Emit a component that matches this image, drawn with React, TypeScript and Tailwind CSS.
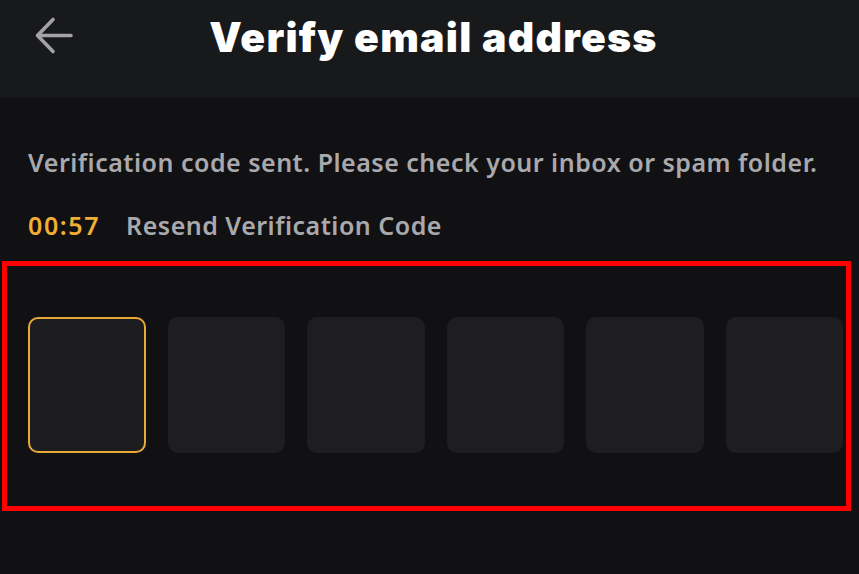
import { useState } from "react";

const CODE_LENGTH = 6;

function BackArrow() {
    return (
        <svg width="40" height="40" viewBox="0 0 40 40" fill="none" className="text-[#a3a3a7]">
            <path
                d="M37 19.5H4M19 3.5L3.5 19.5L19 35.5"
                stroke="currentColor"
                strokeWidth="3.6"
                strokeLinecap="round"
                strokeLinejoin="round"
            />
        </svg>
    );
}

export default function App() {
    const [active] = useState(0);

    return (
        <div className="w-[859px] h-[574px] bg-[#111113] overflow-hidden font-['Open_Sans',sans-serif]">
            {/* HEADER */}
            <div className="h-[98px] bg-[#18191b] flex items-start pt-[16px] px-[34px]">
                <div className="w-[40px] flex justify-center">
                    <BackArrow />
                </div>
                <h1 className="flex-1 text-center text-white text-[41px] leading-[42px] font-black font-['Inter',sans-serif] tracking-[1.25px] pr-[32px]">
                    Verify email address
                </h1>
            </div>

            {/* BODY */}
            <div className="px-[28px] pt-[48px] font-['Noto_Sans',sans-serif] font-semibold text-[25px] leading-[32px] tracking-[0.5px]">
                <p className="text-[#a9a9ad]">
                    Verification code sent. Please check your inbox or spam folder.
                </p>
                <div className="mt-[31px] flex items-center gap-[26px]">
                    <span className="text-[#f0ae35] tracking-[1.6px]">00:57</span>
                    <button className="text-[#a9a9ad]">Resend Verification Code</button>
                </div>
            </div>

            {/* CODE INPUTS */}
            <div className="mt-[20px] ml-[2px] w-[849px] border-[5px] border-[#ff0000] pt-[51px] pb-[53px] pl-[21px] pr-[3px]">
                <div className="grid grid-cols-6 gap-[22px]">
                    {Array.from({ length: CODE_LENGTH }).map((_, i) => (
                        <div
                            key={i}
                            className={
                                i === active
                                    ? "h-[136px] rounded-[10px] bg-[#1d1d20] border-[2px] border-[#eaa838]"
                                    : "h-[136px] rounded-[10px] bg-[#1e1e21]"
                            }
                        />
                    ))}
                </div>
            </div>
        </div>
    );
}
